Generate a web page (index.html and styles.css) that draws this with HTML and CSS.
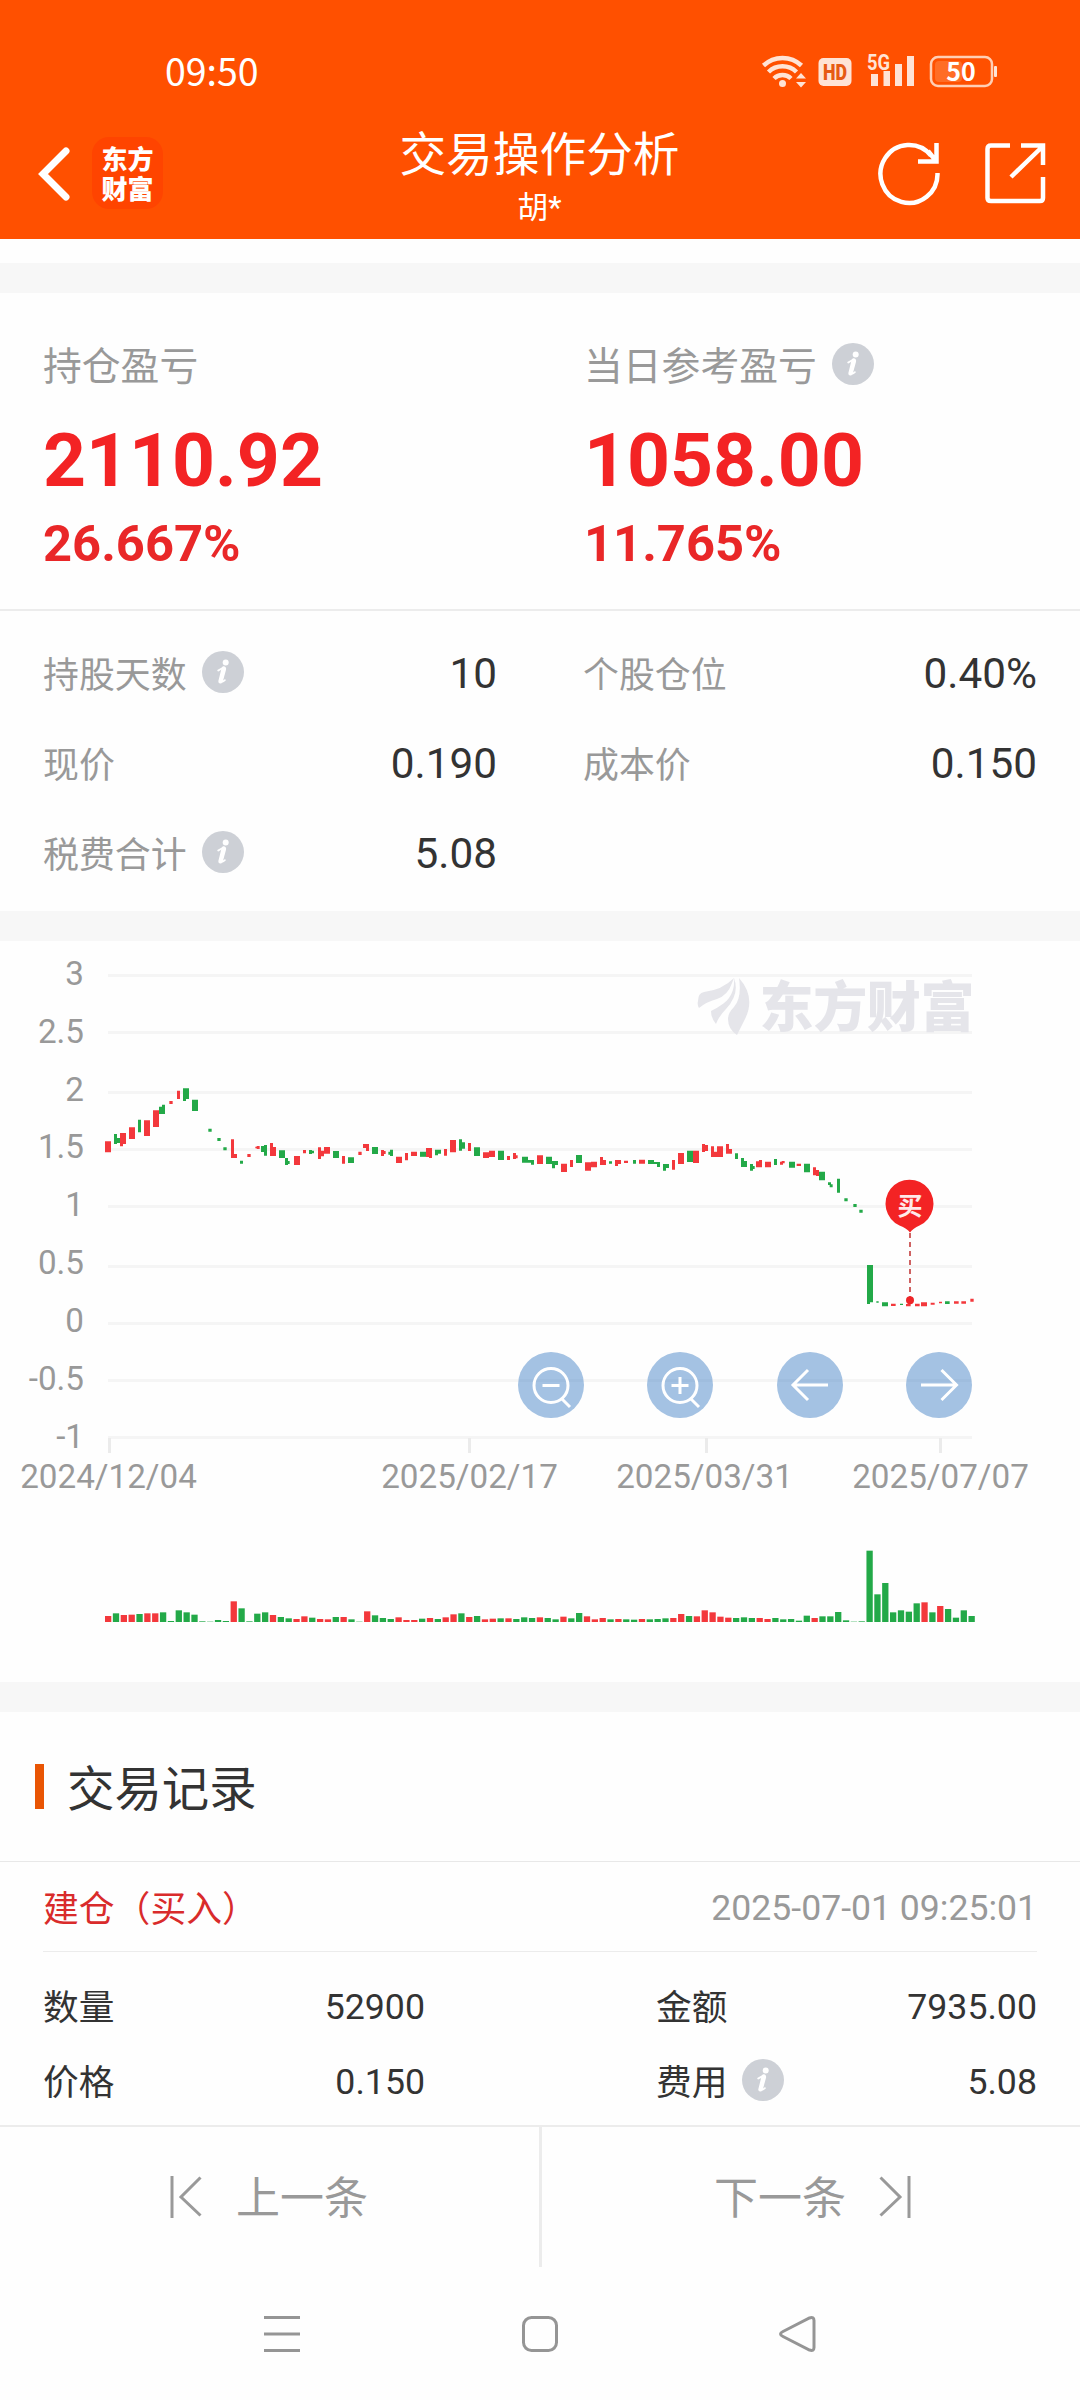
FILE: index.html
```html
<!DOCTYPE html>
<html lang="zh-CN">
<head>
<meta charset="utf-8">
<title>交易操作分析</title>
<link rel="stylesheet" href="styles.css">
</head>
<body>
<svg width="0" height="0" class="defs" aria-hidden="true">
  <symbol id="info" viewBox="0 0 42 42">
    <circle cx="21" cy="21" r="21" fill="#cdd0d6"/>
    <circle cx="23.7" cy="11.4" r="3" fill="#fff"/>
    <path d="M16.2 19.6c2.6-1.8 4.600-2.600 6.100-2.600.9 0 1.100.6.800 1.700l-3.100 11.200c-.3 1.200.5 1.200 2.900-.8" fill="none" stroke="#fff" stroke-width="1.800" stroke-linecap="round"/>
    <path d="M21.600 17.300l-3.300 13.200" stroke="#fff" stroke-width="4" stroke-linecap="round"/>
  </symbol>
</svg>
<header class="header">
  <div class="status">
    <span class="clock">09:50</span>
    <svg class="status-icons" width="240" height="40" viewBox="760 50 240 40">
      <g fill="none" stroke="#ffe3d5" stroke-width="4.500">
        <path d="M763.500 65.500a27.500 27.500 0 0 1 38 0"/>
        <path d="M768.500 72a20 20 0 0 1 28 0"/>
        <path d="M774 78.500a12 12 0 0 1 17 0"/>
      </g>
      <g fill="#ffe3d5">
        <circle cx="782.500" cy="83.500" r="3.500"/>
        <path d="M796 78.500l5-5.500 5 5.500zM796 82l5 5.500 5-5.500z"/>
        <rect x="818.500" y="58" width="33" height="28" rx="5"/>
        <path d="M871 74h7v12h-7zM883.500 71h6.500v15h-6.500zM895 64h7v22h-7zM907 56h7v30h-7z"/>
        <rect x="994" y="66" width="3" height="11" rx="1"/>
      </g>
      <text class="hd" x="835" y="80.300" text-anchor="middle" textLength="24" lengthAdjust="spacingAndGlyphs">HD</text>
      <text class="fiveg" x="867" y="69.500" textLength="23" lengthAdjust="spacingAndGlyphs">5G</text>
      <rect x="935" y="61" width="27" height="21" rx="4" fill="#ff6d26"/>
      <rect x="931" y="57" width="61" height="29" rx="7" fill="none" stroke="#ffcfb5" stroke-width="2.500"/>
      <text class="battery" x="961" y="80.500" text-anchor="middle">50</text>
    </svg>
  </div>
  <div class="navbar">
    <div class="nav-left">
      <svg width="34" height="60" viewBox="37 144 34 60"><path d="M66 151L43 174l23 23" fill="none" stroke="#fff" stroke-width="7" stroke-linecap="round"/></svg>
      <div class="logo">东方<br>财富</div>
    </div>
    <div class="titles">
      <h1>交易操作分析</h1>
      <p>胡*</p>
    </div>
    <svg class="nav-right" width="174" height="68" viewBox="875 139 174 68" fill="none" stroke="#fff" stroke-width="4.500">
      <path d="M937.500 173a28.500 29 0 1 1-6.500-17.500"/>
      <path d="M936.500 143v18.500H918M936 161l-8-10" />
      <path d="M1010 145.500h-19q-3.500 0-3.500 3.500v49q0 3 3.500 3h49q3 0 3-3v-21M1021 145.500h22V165M1042 147l-31 30"/>
    </svg>
  </div>
</header>

<section class="summary">
  <div class="profit">
    <div class="label"><span>持仓盈亏</span></div>
    <div class="amount">2110.92</div>
    <div class="percent">26.667%</div>
  </div>
  <div class="profit">
    <div class="label"><span>当日参考盈亏</span><svg class="info"><use href="#info"/></svg></div>
    <div class="amount">1058.00</div>
    <div class="percent">11.765%</div>
  </div>
</section>

<section class="details">
  <div class="item"><span>持股天数</span><svg class="info"><use href="#info"/></svg><b>10</b></div>
  <div class="item"><span>个股仓位</span><b>0.40%</b></div>
  <div class="item"><span>现价</span><b>0.190</b></div>
  <div class="item"><span>成本价</span><b>0.150</b></div>
  <div class="item"><span>税费合计</span><svg class="info"><use href="#info"/></svg><b>5.08</b></div>
</section>

<section class="chart">
  <svg class="plot" width="1080" height="741" viewBox="0 941 1080 741">
    <path class="grid" d="M108 975.500H972M108 1032.500H972M108 1092.500H972M108 1149.500H972M108 1206.500H972M108 1266.500H972M108 1323.500H972M108 1380.500H972M108 1437.500H972"/>
    <g class="watermark">
      <path d="M698 1001q0-8 6-9 18-2 30-14l-2 5q-4 12-15 16-11 3-18 9-2-3-1-7zM734 978q6 16-8 31-7 7-10 15-5-6-5-13 14-7 18-13 6-8 5-20zM739 978q17 19 6 41l-8 16q-9-6-9-16 0-6 6-12 8-9 5-29z"/>
      <text x="759.500" y="1026.500" textLength="215">东方财富</text>
    </g>
    <path class="ticks" d="M109.500 1438v15M469.500 1438v15M706.500 1438v15M940.500 1438v15"/>
    <g class="axis" text-anchor="end">
      <text x="84" y="985">3</text><text x="84" y="1043">2.5</text><text x="84" y="1101">2</text>
      <text x="84" y="1158">1.5</text><text x="84" y="1216">1</text><text x="84" y="1274">0.5</text>
      <text x="84" y="1332">0</text><text x="84" y="1390">-0.5</text><text x="84" y="1448">-1</text>
    </g>
    <g class="axis" text-anchor="middle">
      <text x="108.500" y="1488">2024/12/04</text><text x="469.500" y="1488">2025/02/17</text>
      <text x="704.500" y="1488">2025/03/31</text><text x="940.500" y="1488">2025/07/07</text>
    </g>
    <g transform="translate(90 1060) scale(.33333)">
      <path class="up" d="M45 244h18v33h-18zM90 219h18v33h-9v7h-9zM117 202h18v35h-18zM162 181h18v47h-18zM189 151h18v50h-18zM238 123h10v9h-10zM261 92h9v25h-9zM423 238h9v44h9v12h-18zM472 282h10v9h-10zM496 260h4v-2h9v9h-9v-2h-4zM540 249h9v12h9v27h-18zM612 288h18v27h-18zM639 270h9v10h-9zM684 262h9v10h9v-11h18v20h-18v8h-9v8h-9zM756 288h9v23h-9zM805 275h10v10h-10zM819 252h18v21h-9v-9h-9zM873 270h9v3h5v9h-5v6h-9zM918 290h18v19h-18zM945 280h9v20h-9zM963 275h18v13h-18zM1008 264h12v27h-12z"/>
      <path class="down" d="M72 222h9v12h9v15h-9v3h-9zM144 179h9v38h-9zM207 140h9v-6h9v28h-18zM279 85h18v32h-9v6h-9zM306 119h18v34h-18zM355 206h10v9h-10zM382 234h10v9h-10zM400 262h10v9h-10zM450 302h9v9h-9zM513 258h9v-3h9v32h-9v-11h-9zM567 271h18v23h-18zM585 294h9v9h5v9h-5v3h-9zM657 270h9v2h6v8h-6v2h-9zM729 273h18v21h-18zM774 292h18v17h-18zM846 261h18v21h-18zM895 275h5v-6h9v19h-9v-4h-5zM990 275h18v15h-18z"/>
    </g>
    <g transform="translate(400 1110) scale(.33333)">
      <path class="up" d="M-3 142h9v17h-9zM15 129h9v22h-9zM33 126h18v12h-18zM78 114h18v30h-9v-3h-9zM132 117h9v20h-9zM150 90h18v37h-18zM204 99h9v24h-9zM249 127h18v-5h18v19h-18v3h-18zM321 138h9v12h-9zM339 129h9v7h5v9h-5v2h-9zM411 136h18v26h-18zM483 161h18v25h-18zM510 150h9v21h-9zM555 157h18v-2h18v17h-18v10h-18zM600 141h9v9h9v15h-18zM645 150h18v12h-9v6h-9zM672 152h12v7h-12zM717 149h18v12h-18zM816 150h9v29h-9zM834 129h18v33h-18zM879 122h18v37h-18zM906 102h9v3h9v18h-9v3h-9zM933 109h9v16h9v-16h18v32h-36zM978 102h9v15h9v14h-18z"/>
      <path class="down" d="M60 126h18v13h-18zM105 119h18v12h-9v5h-9zM177 88h9v9h9v19h-9v6h-9zM222 112h18v26h-18zM294 122h18v28h-18zM366 140h18v10h18v14h-9v-6h-27zM438 140h18v13h18v12h-9v10h-9v-13h-18zM528 135h18v24h-18zM627 154h9v7h-9zM699 150h9v11h-9zM744 150h18v6h18v15h-9v-9h-27zM789 162h18v12h-9v8h-9zM861 122h18v34h-18z"/>
    </g>
    <g transform="translate(660 960) scale(.33333)">
      <path class="up" d="M288 604h9v-4h9v22h-18zM315 605h18v17h-18zM360 605h5v-2h9v7h-5v4h-9zM410 611h13v7h-13zM459 622h9v8h9v18h-9v-2h-9zM693 1031h14v7h-14zM738 1032h14v7h-14zM765 1031h14v8h-14zM783 1027h18v12h-18zM812 1028h12v6h-12zM837 1025h9v5h-9zM882 1024h14v7h-14zM904 1024h14v7h-14zM931 1016h10v9h-10z"/>
      <path class="down" d="M225 580h9v17h-9zM243 594h9v9h9v18h-18zM270 612h9v6h5v9h-5v5h-9zM342 597h9v18h-9zM387 605h18v18h-18zM432 611h18v26h-18zM477 635h18v26h-18zM504 667h9v6h5v9h-9v-7h-5zM531 656h9v42h-9zM553 715h10v9h-10zM580 732h10v9h-10zM598 749h10v9h-10zM621 915h18v112h-9v5h-9zM649 1024h7v4h-7zM666 1027h18v12h-18zM720 1031h9v4h-9zM855 1024h14v8h-14z"/>
    </g>
    <path d="M910 1233v65" stroke="#cf6262" stroke-width="2" stroke-dasharray="5 4"/>
    <circle cx="910" cy="1300.300" r="4" fill="#ee2427"/>
    <path d="M910 1232.500q-3-4-10.500-7A24 24 0 1 1 919.500 1225.500q-6.500 3-9.500 7z" fill="#f32324"/>
    <text class="buy" x="910" y="1214.500" text-anchor="middle">买</text>
    <g id="volume"></g>
  </svg>
  <div class="controls">
    <svg viewBox="0 0 66 66"><circle class="disc" cx="33" cy="33" r="33"/><path d="M24.500 33.500h17M44 47l8 8"/><circle cx="33" cy="33.500" r="17"/></svg>
    <svg viewBox="0 0 66 66"><circle class="disc" cx="33" cy="33" r="33"/><path d="M24.500 33.500h17M33 25v17M44 47l8 8"/><circle cx="33" cy="33.500" r="17"/></svg>
    <svg viewBox="0 0 66 66"><circle class="disc" cx="33" cy="33" r="33"/><path d="M51 33H16M31 18L16 33l15 15"/></svg>
    <svg viewBox="0 0 66 66"><circle class="disc" cx="33" cy="33" r="33"/><path d="M15 33h35M35.500 18l15 15-15 15"/></svg>
  </div>
</section>

<section class="records">
  <h2>交易记录</h2>
  <div class="record-head"><span>建仓（买入）</span><time>2025-07-01 09:25:01</time></div>
  <div class="record-body">
    <div class="cell"><span>数量</span><b>52900</b></div>
    <div class="cell"><span>金额</span><b>7935.00</b></div>
    <div class="cell"><span>价格</span><b>0.150</b></div>
    <div class="cell"><span>费用</span><svg class="info"><use href="#info"/></svg><b>5.08</b></div>
  </div>
</section>

<nav class="pager">
  <div class="page prev"><svg width="34" height="44" viewBox="0 0 34 44"><path d="M4 1v42M32.500 2.500L13 22l19.500 18.500"/></svg><span>上一条</span></div>
  <div class="page next"><span>下一条</span><svg width="34" height="44" viewBox="0 0 34 44"><path d="M30 1v42M1.500 2.500L21 22 1.500 40.500"/></svg></div>
</nav>
<footer class="system">
  <svg width="40" height="40" viewBox="0 0 40 40"><path d="M2 3.500h36M2 20h36M2 36.500h36"/></svg>
  <svg width="40" height="40" viewBox="0 0 40 40"><rect x="3.500" y="3.500" width="33" height="33" rx="8"/></svg>
  <svg width="40" height="40" viewBox="0 0 40 40"><path d="M31.500 4Q36 2.500 36 6.500v27q0 4-4.500 2.500L5 22.500q-5-2.500 0-5z"/></svg>
</footer>
<script src="script.js"></script>
</body>
</html>
```
FILE: styles.css
```css
* { box-sizing: border-box; }
body {
  margin: 0;
  width: 1080px;
  height: 2400px;
  overflow: hidden;
  background: #fefefe;
  color: #333;
  font-family: Roboto, "Noto Sans CJK SC", sans-serif;
}
svg { display: block; flex: none; }
.defs { position: absolute; }
h1, h2, p { margin: 0; font-weight: 400; }
b { font-weight: 400; margin-left: auto; }

.header { height: 239px; background: #ff5000; color: #fff; }
.status { height: 122px; padding: 50px 80px 0 165px; display: flex; justify-content: space-between; }
.clock { font: 37.500px/39px "Noto Sans CJK SC", sans-serif; }
.hd { font: 900 22.500px Roboto, sans-serif; fill: #e65a14; }
.fiveg { font: 700 22px Roboto, sans-serif; fill: #ffe3d5; }
.battery { font: 700 25px "Noto Sans CJK SC", sans-serif; fill: #fff; }
.navbar { height: 117px; display: grid; grid-template-columns: 300px 1fr 300px; padding-right: 31px; padding-left: 37px; }
.nav-left { display: flex; align-items: flex-start; gap: 21px; padding-top: 15px; }
.nav-left svg { margin-top: 7px; }
.logo {
  width: 71px; height: 72px; padding-top: 6px; border-radius: 17px; background: #ff4400;
  text-align: center;
  font: 900 26px/30px "Noto Sans CJK SC", sans-serif;
}
.titles { text-align: center; margin-left: -7px; }
.titles h1 { font-size: 46.700px; line-height: 66px; white-space: nowrap; }
.titles p { font-size: 31px; line-height: 40px; }
.nav-right { justify-self: end; margin-top: 17px; }

.summary { margin-top: 24px; border-top: 30px solid #f7f7f7; border-bottom: 2px solid #ececec; height: 348px; padding: 45px 43px 0; display: grid; grid-template-columns: 541px 1fr; }
.label { display: flex; align-items: center; font-size: 38.800px; line-height: 52px; height: 52px; color: #999; }
.label span { padding-top: 6px; }
.info { width: 42px; height: 42px; margin-left: 15px; }
.amount { font-size: 75px; font-weight: 700; line-height: 88px; margin-top: 26px; color: #f32324; }
.percent { font-size: 50.700px; font-weight: 700; line-height: 60px; margin-top: 10px; color: #e92728; }

.details { height: 300px; padding: 17px 43px 0; display: grid; grid-template-columns: 454px 454px; grid-auto-rows: 90px; column-gap: 86px; }
.item { display: flex; align-items: center; height: 90px; font-size: 35.900px; }
.item span { color: #999; padding-bottom: 3px; }
.item b { font-size: 42.300px; }
.item .info { margin-bottom: 2px; }

.chart { position: relative; height: 771px; border-top: 30px solid #f7f7f7; }
.grid { stroke: #f5f5f5; stroke-width: 3; }
.ticks { stroke: #ebebeb; stroke-width: 3; }
.axis { font: 33.200px Roboto, sans-serif; fill: #999; }
.watermark { fill: #e5e5ea; font: 900 54px "Noto Sans CJK SC", sans-serif; }
.up { fill: #f3383c; }
.down { fill: #23a948; }
.buy { font: 700 25px "Noto Sans CJK SC", sans-serif; fill: #ffe9e9; }
.controls { position: absolute; left: 518px; top: 411px; width: 454px; display: flex; justify-content: space-between; }
.controls svg { width: 66px; height: 66px; fill: none; stroke: #fff; stroke-width: 3; }
.controls .disc { fill: #4a86c8; fill-opacity: .5; stroke: none; }

.records { height: 443px; border-top: 30px solid #f7f7f7; }
.records h2 { height: 150px; padding: 0 0 3px 35px; border-bottom: 1px solid #e8e8e8; display: flex; align-items: center; font-size: 47.400px; }
.records h2::before { content: ""; width: 9px; height: 45px; margin: 3px 23px 0 0; background: #e95504; }
.record-head { height: 90px; margin: 0 43px; border-bottom: 1px solid #ececec; display: flex; align-items: center; justify-content: space-between; font-size: 35.800px; color: #999; }
.record-head span { color: #d92b2b; padding-bottom: 1px; }
.record-head time { font-size: 35.600px; padding-top: 3px; }
.record-body { padding: 17px 43px 0; display: grid; grid-template-columns: 382px 381px; grid-auto-rows: 75px; justify-content: space-between; font-size: 35.700px; }
.cell { display: flex; align-items: center; }
.cell span { padding-bottom: 4px; }
.cell .info { margin-bottom: 3px; }

.pager { height: 142px; border-top: 2px solid #ececec; display: flex; font-size: 44px; color: #999; }
.page { display: flex; align-items: center; line-height: 60px; }
.page span { padding-top: 4px; }
.page svg { fill: none; stroke: #999; stroke-width: 3; }
.prev { width: 542px; padding-left: 168px; gap: 34px; border-right: 3px solid #ececec; }
.next { padding-left: 172px; gap: 33px; }
.system { height: 132px; padding: 47px 262px 0; display: flex; justify-content: space-between; }
.system svg { fill: none; stroke: #959595; stroke-width: 3; }
```
FILE: script.js
```js
// Daily volume: direction (r = up, g = down) followed by the bar height in thirds of a pixel.
const volumes = "r18 g26 r21 r22 g24 r26 r26 g29 g3 g35 g29 g22 g2 g1 g6 g3 r62 g41 g2 g25 g29 r21 g15 g11 r9 r17 g13 r9 r8 g15 r15 g8 g1 r32 g20 g12 g9 r14 r6 r6 g10 r12 g9 r14 r23 g26 r15 g18 r8 r10 g11 r11 g9 g14 g12 r14 g12 g8 r16 g11 g27 r17 r8 r12 g8 r9 g8 g7 r9 g8 g9 g11 r12 r24 g18 r17 r35 r29 r16 r13 g12 g14 g12 r12 r9 g12 g8 g9 g4 g19 r12 g17 g17 g30 g5 g1 g2 g214 g83 g117 g29 g35 g31 g56 r59 g29 r48 g39 g13 g35 g18".split(" ");
const BASELINE = 1622;
document.getElementById("volume").innerHTML = volumes.map((v, i) => {
  const h = Number(v.slice(1)) / 3;
  return `<rect class="${v[0] === "r" ? "up" : "down"}" x="${(105 + i * 7.85).toFixed(2)}" y="${(BASELINE - h).toFixed(2)}" width="6.3" height="${h.toFixed(2)}"/>`;
}).join("");
```
